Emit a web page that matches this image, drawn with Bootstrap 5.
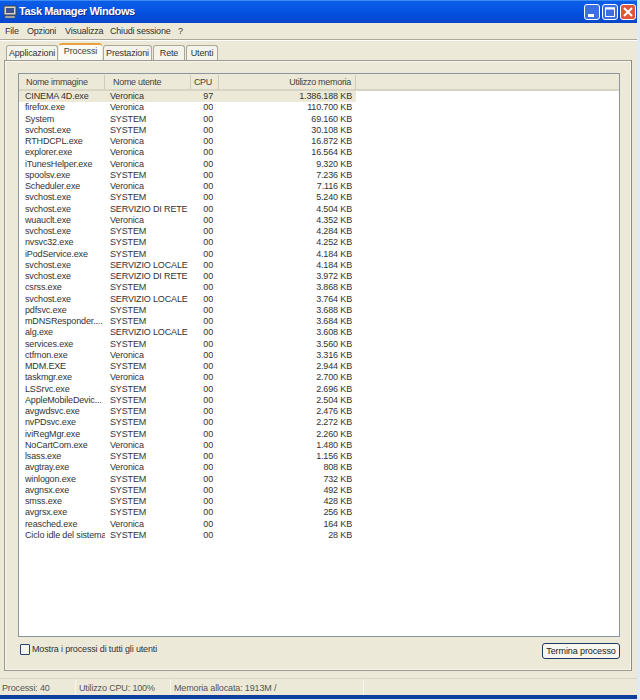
<!doctype html>
<html lang="it"><head><meta charset="utf-8"><title>Task Manager Windows</title>
<link href="https://cdn.jsdelivr.net/npm/bootstrap@5.3.0/dist/css/bootstrap.min.css" rel="stylesheet">
<style>
html,body{margin:0;height:700px;overflow:hidden;background:#dfeaf6}
body{font:9px/13px "Liberation Sans",Arial,sans-serif;color:#333}
.tm-win{width:637px;height:699px;background:#ece9d8;border-bottom:4px solid #0d3e9c}
.tm-title{height:23px;background:linear-gradient(#0a5fe0,#0a5ae8 20%,#0450df 60%,#0a45c8);color:#fff;font-weight:700;font-size:11px;letter-spacing:-.4px;padding:0 1px 0 3px;box-shadow:inset 0 1px #3d8cf5}
.tm-titletext{margin-left:2px;text-shadow:1px 1px #0a2f8c}
.tm-wb{width:16px;height:16px;border:1px solid #fff;border-radius:3px;background:#3b6fe0;margin-left:2px}
.tm-wb.tm-close{background:#e0563a}
.tm-menu{height:16px;padding-left:5px;font-size:9px;letter-spacing:-.2px;color:#333}
.tm-menu span{display:block}
.tm-sep{height:2px;border-top:1px solid #aca899;border-bottom:1px solid #fff}
.tm-tabs.nav-tabs{height:17px;margin:2px 0 0 6px;border:0;align-items:flex-end;flex-wrap:nowrap}
.tm-tabs .nav-link{height:15px;padding:1px 0 0;margin:0 1px 0 0;border:1px solid #aca899;border-bottom:0;border-radius:3px 3px 0 0;background:#f5f4ea;color:#333;font-size:9px;letter-spacing:-.15px;line-height:13px;text-align:center}
.tm-tabs .nav-link.active{height:17px;background:#fbfbf6;border:0;border-top:2px solid #e9a13b;color:#444;margin:0 1px 0 0;padding-top:0}
.tm-panel{width:628px;height:611px;margin-left:4px;border:1px solid #9a9b8e;border-right-color:#8b8c80;background:#ece9d8;padding:12px 11px 0 13px;box-shadow:inset 0 0 0 1px #f7f6ee}
.tm-list{height:564px;width:602px;background:#fff;border:1px solid #8b95a0;overflow:hidden}
.tm-head{height:17px;background:#ece9d8;border-bottom:2px solid #d8d4c4;color:#444;width:100%;letter-spacing:-.3px}
.tm-head>div{border-right:1px solid #cfccbc;height:14px;margin-top:1px;line-height:14px;white-space:nowrap}
.tm-row{height:11.25px;line-height:11.25px;white-space:nowrap;width:337px;color:#333;letter-spacing:-.15px}
.tm-row.tm-sel{background:#ece9d8}
.tm-c1{width:86px;padding-left:6px;flex:none;overflow:hidden}
.tm-c2{width:86px;padding-left:5px;flex:none;overflow:hidden}
.tm-c3{width:28px;padding-right:6px;text-align:right;flex:none}
.tm-c4{width:137px;padding-right:4px;text-align:right;flex:none}
.tm-head .tm-c1{padding-left:7px}.tm-head .tm-c2{padding-left:8px}
.tm-foot{margin-top:6px;width:602px}
.tm-check.form-check-input{width:10px;height:11px;margin:0 2px 0 2px;border:1px solid #26436b;border-radius:1px;background-color:#f4f3ec;flex:none}
.tm-foot label{color:#333;letter-spacing:-.15px}
.tm-btn.btn{width:78px;height:16px;padding:0;font-size:9px;letter-spacing:-.1px;line-height:13px;color:#222;background:#f7f6f0;border:1px solid #1f3a5f;border-radius:3px;white-space:nowrap}
.tm-status{height:17px;margin-top:7px;border-top:1px solid #d8d5c6;color:#555;font-size:9px;letter-spacing:-.15px}
.tm-status>div{height:100%;border-right:1px solid #f7f6ee;line-height:16px;white-space:nowrap;padding-top:1px}
.tm-s1{width:76px;padding-left:2px}.tm-s2{width:95px;padding-left:3px}.tm-s3{width:193px;padding-left:3px}
.tm-m1{width:22px}.tm-m2{width:38px}.tm-m3{width:45px}.tm-m4{width:68px}
</style></head><body>
<div class="tm-win d-flex flex-column">
 <div class="tm-title d-flex align-items-center">
  <svg width="14" height="14" viewBox="0 0 14 14"><rect x="1" y="1" width="12" height="9" fill="#d8d4c8" stroke="#444"/><rect x="3" y="3" width="8" height="5" fill="#39538f"/><rect x="2" y="11" width="10" height="2" fill="#bbb" stroke="#555" stroke-width=".5"/></svg>
  <span class="tm-titletext">Task Manager Windows</span>
  <div class="ms-auto d-flex">
   <div class="tm-wb"><svg width="14" height="14" viewBox="0 0 14 14"><rect x="3" y="9" width="6" height="3" fill="#fff"/></svg></div>
   <div class="tm-wb"><svg width="14" height="14" viewBox="0 0 14 14"><rect x="2.5" y="3" width="9" height="8.5" fill="none" stroke="#fff"/><rect x="2" y="2.5" width="10" height="2" fill="#fff"/></svg></div>
   <div class="tm-wb tm-close"><svg width="14" height="14" viewBox="0 0 14 14"><path d="M3 3l8 8M11 3l-8 8" stroke="#fff" stroke-width="2"/></svg></div>
  </div>
 </div>
 <div class="tm-menu d-flex align-items-center">
  <span class="tm-m1">File</span><span class="tm-m2">Opzioni</span><span class="tm-m3">Visualizza</span><span class="tm-m4">Chiudi sessione</span><span>?</span>
 </div>
 <div class="tm-sep"></div>
 <ul class="nav nav-tabs tm-tabs">
  <li class="nav-item"><a class="nav-link" style="width:52px">Applicazioni</a></li>
  <li class="nav-item"><a class="nav-link active" style="width:43px">Processi</a></li>
  <li class="nav-item"><a class="nav-link" style="width:49px">Prestazioni</a></li>
  <li class="nav-item"><a class="nav-link" style="width:32px">Rete</a></li>
  <li class="nav-item"><a class="nav-link" style="width:32px">Utenti</a></li>
 </ul>
 <div class="tm-panel">
  <div class="tm-list">
   <div class="tm-head d-flex"><div class="tm-c1">Nome immagine</div><div class="tm-c2">Nome utente</div><div class="tm-c3">CPU</div><div class="tm-c4">Utilizzo memoria</div></div>
   <div class="tm-row tm-sel d-flex"><div class="tm-c1">CINEMA 4D.exe</div><div class="tm-c2">Veronica</div><div class="tm-c3">97</div><div class="tm-c4">1.386.188 KB</div></div>
   <div class="tm-row d-flex"><div class="tm-c1">firefox.exe</div><div class="tm-c2">Veronica</div><div class="tm-c3">00</div><div class="tm-c4">110.700 KB</div></div>
   <div class="tm-row d-flex"><div class="tm-c1">System</div><div class="tm-c2">SYSTEM</div><div class="tm-c3">00</div><div class="tm-c4">69.160 KB</div></div>
   <div class="tm-row d-flex"><div class="tm-c1">svchost.exe</div><div class="tm-c2">SYSTEM</div><div class="tm-c3">00</div><div class="tm-c4">30.108 KB</div></div>
   <div class="tm-row d-flex"><div class="tm-c1">RTHDCPL.exe</div><div class="tm-c2">Veronica</div><div class="tm-c3">00</div><div class="tm-c4">16.872 KB</div></div>
   <div class="tm-row d-flex"><div class="tm-c1">explorer.exe</div><div class="tm-c2">Veronica</div><div class="tm-c3">00</div><div class="tm-c4">16.564 KB</div></div>
   <div class="tm-row d-flex"><div class="tm-c1">iTunesHelper.exe</div><div class="tm-c2">Veronica</div><div class="tm-c3">00</div><div class="tm-c4">9.320 KB</div></div>
   <div class="tm-row d-flex"><div class="tm-c1">spoolsv.exe</div><div class="tm-c2">SYSTEM</div><div class="tm-c3">00</div><div class="tm-c4">7.236 KB</div></div>
   <div class="tm-row d-flex"><div class="tm-c1">Scheduler.exe</div><div class="tm-c2">Veronica</div><div class="tm-c3">00</div><div class="tm-c4">7.116 KB</div></div>
   <div class="tm-row d-flex"><div class="tm-c1">svchost.exe</div><div class="tm-c2">SYSTEM</div><div class="tm-c3">00</div><div class="tm-c4">5.240 KB</div></div>
   <div class="tm-row d-flex"><div class="tm-c1">svchost.exe</div><div class="tm-c2">SERVIZIO DI RETE</div><div class="tm-c3">00</div><div class="tm-c4">4.504 KB</div></div>
   <div class="tm-row d-flex"><div class="tm-c1">wuauclt.exe</div><div class="tm-c2">Veronica</div><div class="tm-c3">00</div><div class="tm-c4">4.352 KB</div></div>
   <div class="tm-row d-flex"><div class="tm-c1">svchost.exe</div><div class="tm-c2">SYSTEM</div><div class="tm-c3">00</div><div class="tm-c4">4.284 KB</div></div>
   <div class="tm-row d-flex"><div class="tm-c1">nvsvc32.exe</div><div class="tm-c2">SYSTEM</div><div class="tm-c3">00</div><div class="tm-c4">4.252 KB</div></div>
   <div class="tm-row d-flex"><div class="tm-c1">iPodService.exe</div><div class="tm-c2">SYSTEM</div><div class="tm-c3">00</div><div class="tm-c4">4.184 KB</div></div>
   <div class="tm-row d-flex"><div class="tm-c1">svchost.exe</div><div class="tm-c2">SERVIZIO LOCALE</div><div class="tm-c3">00</div><div class="tm-c4">4.184 KB</div></div>
   <div class="tm-row d-flex"><div class="tm-c1">svchost.exe</div><div class="tm-c2">SERVIZIO DI RETE</div><div class="tm-c3">00</div><div class="tm-c4">3.972 KB</div></div>
   <div class="tm-row d-flex"><div class="tm-c1">csrss.exe</div><div class="tm-c2">SYSTEM</div><div class="tm-c3">00</div><div class="tm-c4">3.868 KB</div></div>
   <div class="tm-row d-flex"><div class="tm-c1">svchost.exe</div><div class="tm-c2">SERVIZIO LOCALE</div><div class="tm-c3">00</div><div class="tm-c4">3.764 KB</div></div>
   <div class="tm-row d-flex"><div class="tm-c1">pdfsvc.exe</div><div class="tm-c2">SYSTEM</div><div class="tm-c3">00</div><div class="tm-c4">3.688 KB</div></div>
   <div class="tm-row d-flex"><div class="tm-c1">mDNSResponder....</div><div class="tm-c2">SYSTEM</div><div class="tm-c3">00</div><div class="tm-c4">3.684 KB</div></div>
   <div class="tm-row d-flex"><div class="tm-c1">alg.exe</div><div class="tm-c2">SERVIZIO LOCALE</div><div class="tm-c3">00</div><div class="tm-c4">3.608 KB</div></div>
   <div class="tm-row d-flex"><div class="tm-c1">services.exe</div><div class="tm-c2">SYSTEM</div><div class="tm-c3">00</div><div class="tm-c4">3.560 KB</div></div>
   <div class="tm-row d-flex"><div class="tm-c1">ctfmon.exe</div><div class="tm-c2">Veronica</div><div class="tm-c3">00</div><div class="tm-c4">3.316 KB</div></div>
   <div class="tm-row d-flex"><div class="tm-c1">MDM.EXE</div><div class="tm-c2">SYSTEM</div><div class="tm-c3">00</div><div class="tm-c4">2.944 KB</div></div>
   <div class="tm-row d-flex"><div class="tm-c1">taskmgr.exe</div><div class="tm-c2">Veronica</div><div class="tm-c3">00</div><div class="tm-c4">2.700 KB</div></div>
   <div class="tm-row d-flex"><div class="tm-c1">LSSrvc.exe</div><div class="tm-c2">SYSTEM</div><div class="tm-c3">00</div><div class="tm-c4">2.696 KB</div></div>
   <div class="tm-row d-flex"><div class="tm-c1">AppleMobileDevic...</div><div class="tm-c2">SYSTEM</div><div class="tm-c3">00</div><div class="tm-c4">2.504 KB</div></div>
   <div class="tm-row d-flex"><div class="tm-c1">avgwdsvc.exe</div><div class="tm-c2">SYSTEM</div><div class="tm-c3">00</div><div class="tm-c4">2.476 KB</div></div>
   <div class="tm-row d-flex"><div class="tm-c1">nvPDsvc.exe</div><div class="tm-c2">SYSTEM</div><div class="tm-c3">00</div><div class="tm-c4">2.272 KB</div></div>
   <div class="tm-row d-flex"><div class="tm-c1">iviRegMgr.exe</div><div class="tm-c2">SYSTEM</div><div class="tm-c3">00</div><div class="tm-c4">2.260 KB</div></div>
   <div class="tm-row d-flex"><div class="tm-c1">NoCartCom.exe</div><div class="tm-c2">Veronica</div><div class="tm-c3">00</div><div class="tm-c4">1.480 KB</div></div>
   <div class="tm-row d-flex"><div class="tm-c1">lsass.exe</div><div class="tm-c2">SYSTEM</div><div class="tm-c3">00</div><div class="tm-c4">1.156 KB</div></div>
   <div class="tm-row d-flex"><div class="tm-c1">avgtray.exe</div><div class="tm-c2">Veronica</div><div class="tm-c3">00</div><div class="tm-c4">808 KB</div></div>
   <div class="tm-row d-flex"><div class="tm-c1">winlogon.exe</div><div class="tm-c2">SYSTEM</div><div class="tm-c3">00</div><div class="tm-c4">732 KB</div></div>
   <div class="tm-row d-flex"><div class="tm-c1">avgnsx.exe</div><div class="tm-c2">SYSTEM</div><div class="tm-c3">00</div><div class="tm-c4">492 KB</div></div>
   <div class="tm-row d-flex"><div class="tm-c1">smss.exe</div><div class="tm-c2">SYSTEM</div><div class="tm-c3">00</div><div class="tm-c4">428 KB</div></div>
   <div class="tm-row d-flex"><div class="tm-c1">avgrsx.exe</div><div class="tm-c2">SYSTEM</div><div class="tm-c3">00</div><div class="tm-c4">256 KB</div></div>
   <div class="tm-row d-flex"><div class="tm-c1">reasched.exe</div><div class="tm-c2">Veronica</div><div class="tm-c3">00</div><div class="tm-c4">164 KB</div></div>
   <div class="tm-row d-flex"><div class="tm-c1">Ciclo idle del sistema</div><div class="tm-c2">SYSTEM</div><div class="tm-c3">00</div><div class="tm-c4">28 KB</div></div>
  </div>
  <div class="tm-foot d-flex align-items-start justify-content-between">
   <div class="d-flex align-items-center"><input class="form-check-input tm-check" type="checkbox" id="tutti"><label for="tutti">Mostra i processi di tutti gli utenti</label></div>
   <button type="button" class="btn tm-btn">Termina processo</button>
  </div>
 </div>
 <div class="tm-status d-flex">
  <div class="tm-s1">Processi: 40</div><div class="tm-s2">Utilizzo CPU: 100%</div><div class="tm-s3">Memoria allocata: 1913M /</div>
 </div>
</div>
</body></html>
